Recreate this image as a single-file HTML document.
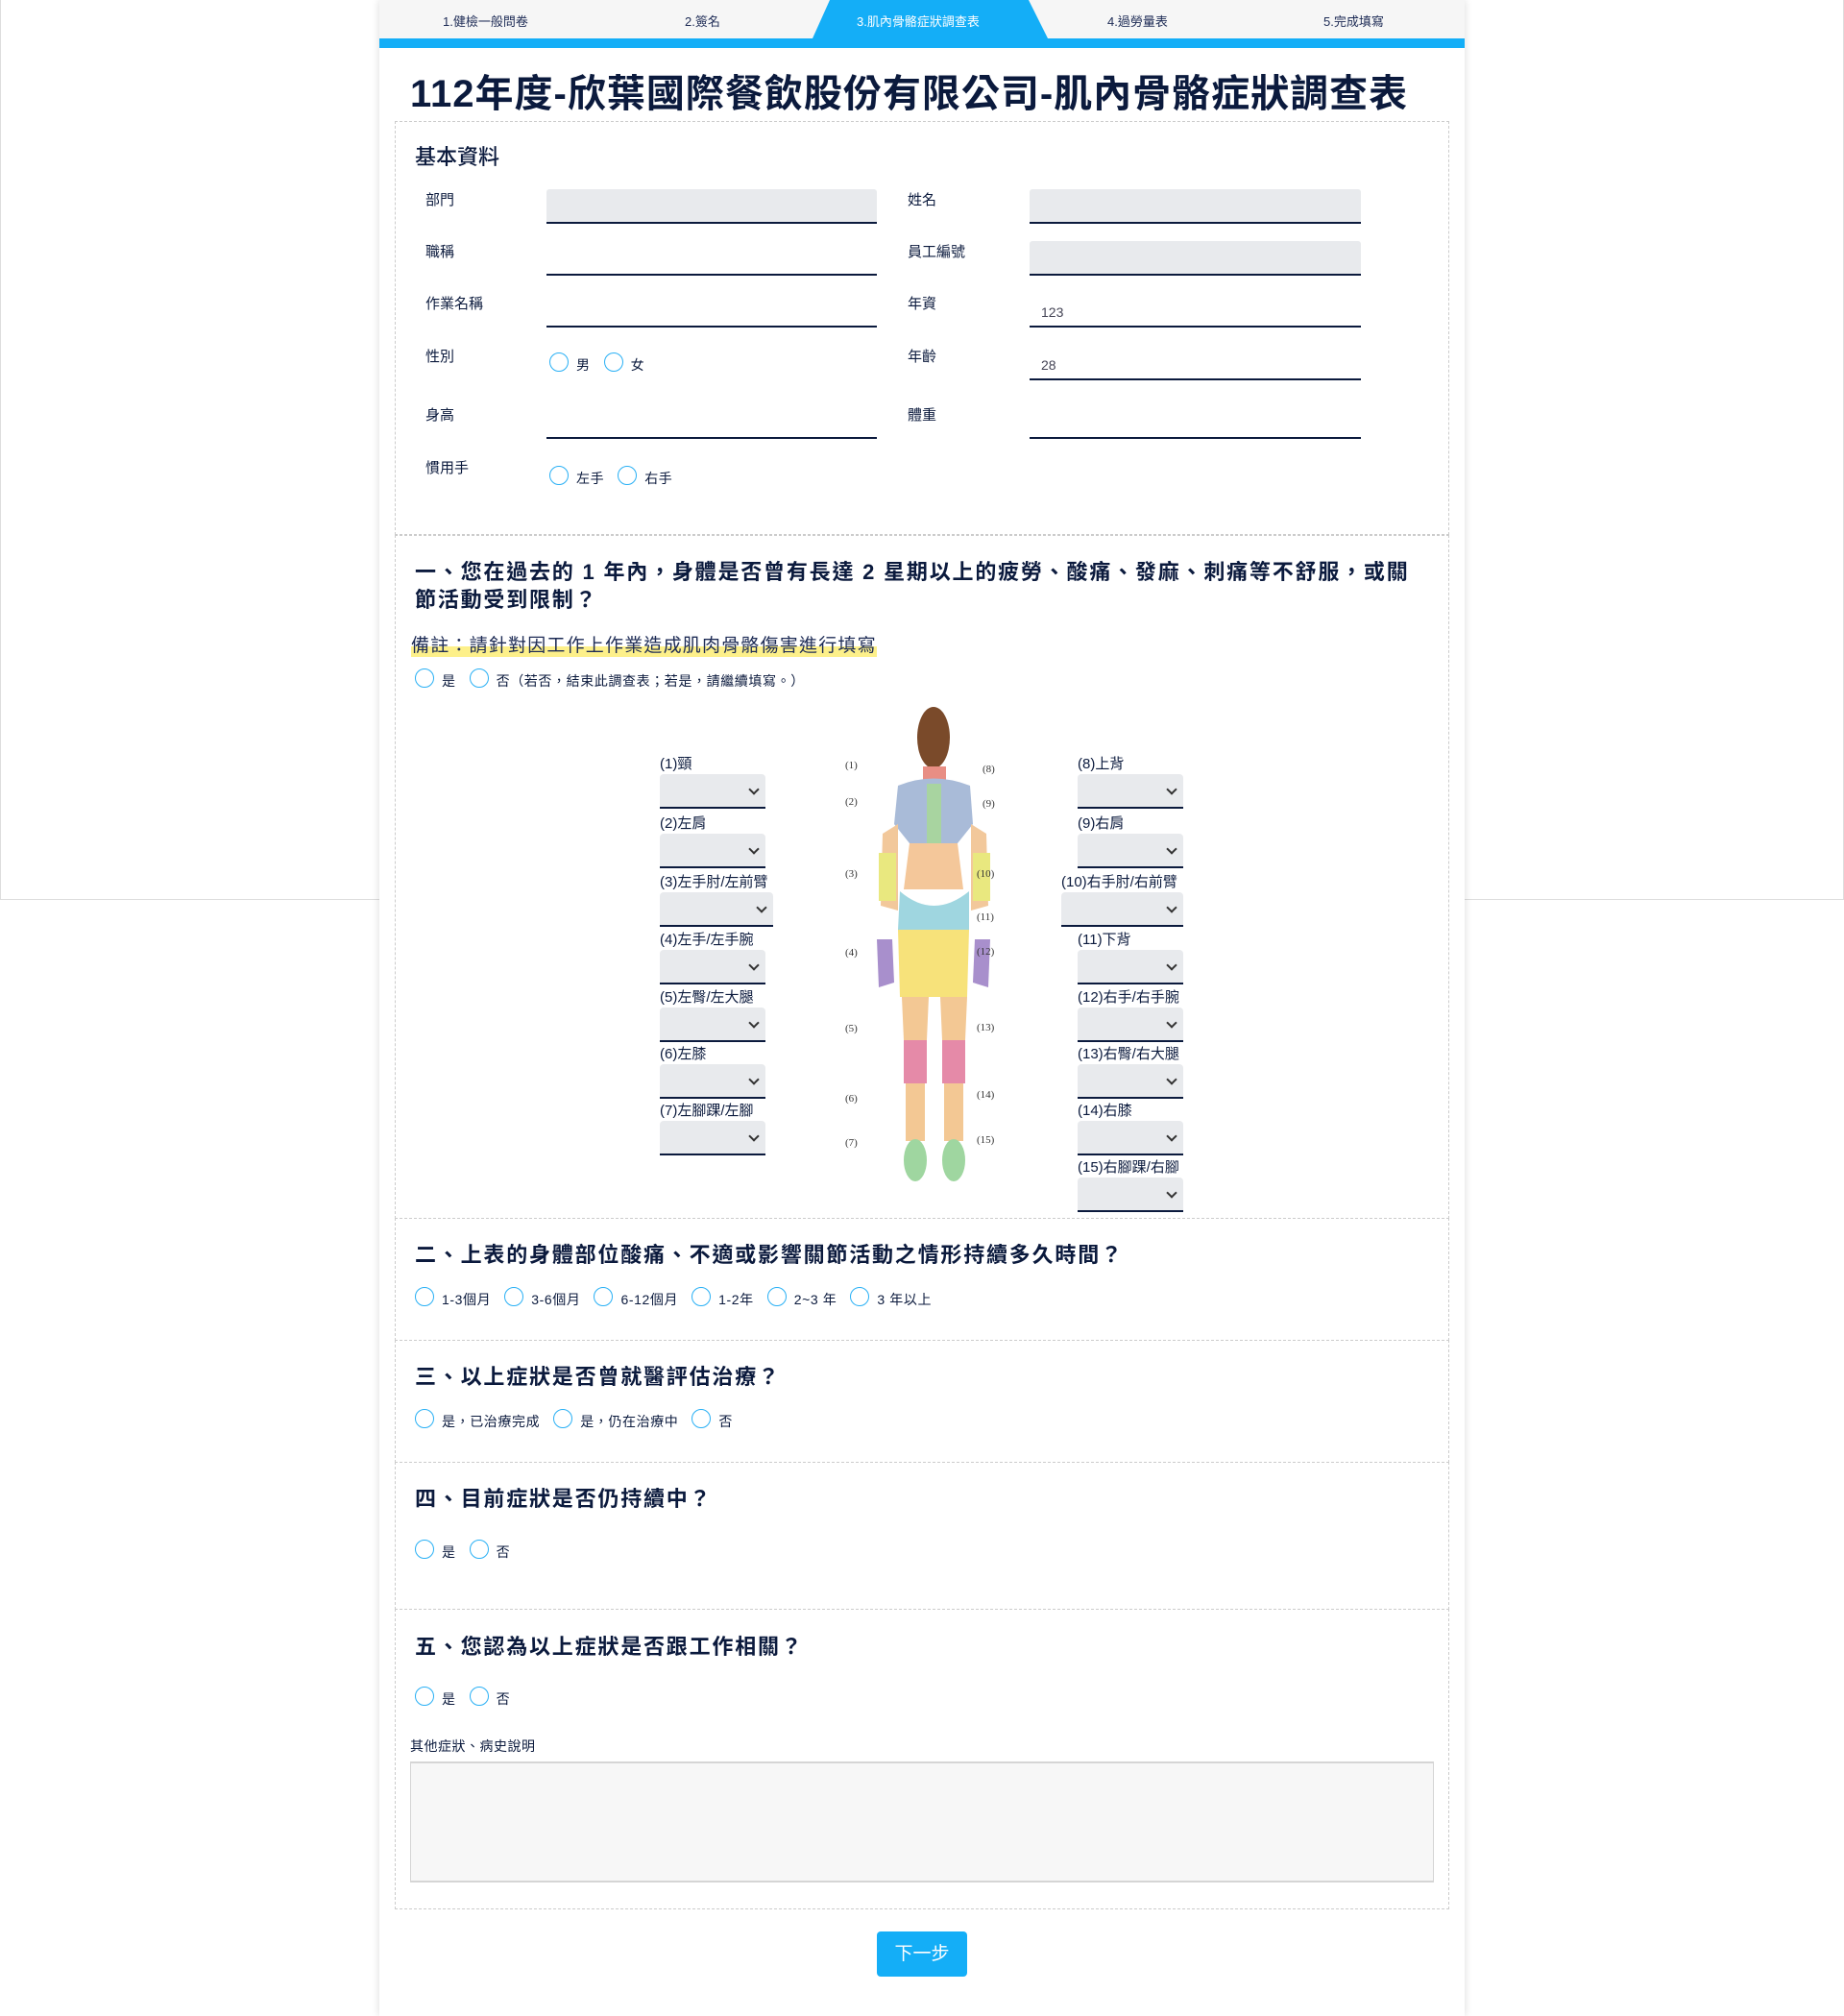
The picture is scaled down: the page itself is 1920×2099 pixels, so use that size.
<!DOCTYPE html>
<html><head><meta charset="utf-8"><style>
*{box-sizing:border-box;margin:0;padding:0}
body{width:1920px;height:2099px;position:relative;background:#fff;font-family:"Liberation Sans","Noto Sans CJK TC",sans-serif;color:#0b1a3d;overflow:hidden}
.frame{position:absolute;left:0;top:0;width:1920px;height:937px;border:1px solid #ddd;border-top:none}
.wrap{position:absolute;left:395px;top:0;width:1130px;height:2099px;background:#fff;box-shadow:0 0 8px rgba(0,0,0,.15)}
.a{position:absolute;white-space:nowrap}
.steps{position:absolute;left:0;top:0;width:1130px;height:40px;background:#f6f6f6}
.bar{position:absolute;left:0;top:40px;width:1130px;height:10px;background:#14aef7}
.st{position:absolute;top:12px;font-size:13px;color:#1d2b55}
.box{position:absolute;left:16px;width:1098px;border:1px dashed #ccc}
.lb{position:absolute;font-size:15px}
.in{position:absolute;height:36px;border-bottom:2px solid #0b1a3d;border-radius:3px 3px 0 0;font-size:14px;color:#445;padding:12px 12px 0}
.g{background:#e8eaed}
.r{display:inline-block;width:20px;height:20px;border:1.5px solid #29b0f5;border-radius:50%;vertical-align:-2px;margin-right:8px}
.ro{position:absolute;font-size:14px;white-space:nowrap;letter-spacing:.6px}
.ro span.t{margin-right:14px}
.q{position:absolute;font-size:22px;font-weight:bold;letter-spacing:1.8px;white-space:nowrap}
.sl{position:absolute;width:110px;height:36px;background:#e8eaed;border-bottom:2px solid #0b1a3d;border-radius:4px 4px 0 0}
.sl:after{content:"";position:absolute;right:8px;top:12px;width:6px;height:6px;border-right:2px solid #333;border-bottom:2px solid #333;transform:rotate(45deg)}
.sll{position:absolute;font-size:15px;white-space:nowrap}
</style></head><body>
<div class="frame"></div>
<div class="wrap">
<div class="steps"></div>
<svg class="a" style="left:451px;top:0" width="250" height="40"><polygon points="0,0 225,0 245,40 0,40" fill="#14aef7"/><polygon points="0,0 18,0 0,40" fill="#f6f6f6"/></svg>
<div class="bar"></div>
<div class="st" style="left:66px">1.健檢一般問卷</div>
<div class="st" style="left:318px">2.簽名</div>
<div class="st" style="left:497px;color:#fff">3.肌內骨骼症狀調查表</div>
<div class="st" style="left:758px">4.過勞量表</div>
<div class="st" style="left:983px">5.完成填寫</div>
<div class="a" style="left:32px;top:65px;font-size:40px;font-weight:bold;letter-spacing:1px">112年度-欣葉國際餐飲股份有限公司-肌內骨骼症狀調查表</div>

<div class="box" style="top:126px;height:431px"></div>
<div class="a" style="left:37px;top:146px;font-size:22px;font-weight:500">基本資料</div>
<div class="lb" style="left:48px;top:197px">部門</div><div class="in g" style="left:174px;top:197px;width:344px"></div>
<div class="lb" style="left:550px;top:197px">姓名</div><div class="in g" style="left:677px;top:197px;width:345px"></div>
<div class="lb" style="left:48px;top:251px">職稱</div><div class="in" style="left:174px;top:251px;width:344px"></div>
<div class="lb" style="left:550px;top:251px">員工編號</div><div class="in g" style="left:677px;top:251px;width:345px"></div>
<div class="lb" style="left:48px;top:305px">作業名稱</div><div class="in" style="left:174px;top:305px;width:344px"></div>
<div class="lb" style="left:550px;top:305px">年資</div><div class="in" style="left:677px;top:305px;width:345px">123</div>
<div class="lb" style="left:48px;top:360px">性別</div><div class="ro" style="left:177px;top:367px"><span class="r"></span><span class="t">男</span><span class="r"></span>女</div>
<div class="lb" style="left:550px;top:360px">年齡</div><div class="in" style="left:677px;top:360px;width:345px">28</div>
<div class="lb" style="left:48px;top:421px">身高</div><div class="in" style="left:174px;top:421px;width:344px"></div>
<div class="lb" style="left:550px;top:421px">體重</div><div class="in" style="left:677px;top:421px;width:345px"></div>
<div class="lb" style="left:48px;top:476px">慣用手</div><div class="ro" style="left:177px;top:485px"><span class="r"></span><span class="t">左手</span><span class="r"></span>右手</div>

<div class="box" style="top:557px;height:712px"></div>
<div class="q" style="left:37px;top:578px">一、您在過去的 1 年內，身體是否曾有長達 2 星期以上的疲勞、酸痛、發麻、刺痛等不舒服，或關</div>
<div class="q" style="left:37px;top:607px">節活動受到限制？</div>
<div class="a" style="left:33px;top:657px;font-size:19px;letter-spacing:1.2px;color:#1d2b55;background:linear-gradient(transparent 60%,#fdf08a 60%)">備註：請針對因工作上作業造成肌肉骨骼傷害進行填寫</div>
<div class="ro" style="left:37px;top:696px"><span class="r"></span><span class="t">是</span><span class="r"></span>否（若否，結束此調查表；若是，請繼續填寫。）</div>

<svg class="a" style="left:480px;top:728px" width="180" height="505" viewBox="0 0 180 505">
<g stroke="none">
<ellipse cx="97" cy="40" rx="17" ry="32" fill="#7a4a2a"/>
<rect x="86" y="70" width="24" height="14" fill="#e88e84"/>
<path d="M60 90 Q97 75 135 90 L138 130 L122 150 L72 150 L56 130 Z" fill="#a9bbd8"/>
<rect x="90" y="88" width="15" height="110" fill="#a8d4a0"/>
<path d="M72 150 L122 150 L128 198 L66 198 Z" fill="#f4c79a"/>
<path d="M62 200 Q97 230 134 200 L134 240 L60 240 Z" fill="#9fd6e0"/>
<path d="M60 240 L134 240 L132 310 L62 310 Z" fill="#f7e27a"/>
<path d="M44 140 L60 130 L60 220 L42 215 Z" fill="#f2c89b"/>
<path d="M136 130 L152 140 L154 215 L136 220 Z" fill="#f2c89b"/>
<path d="M40 160 L58 160 L58 210 L40 210 Z" fill="#e9e87f"/>
<path d="M138 160 L156 160 L156 210 L138 210 Z" fill="#e9e87f"/>
<path d="M38 250 L54 250 L56 295 L40 300 Z" fill="#a88fcc"/>
<path d="M140 250 L156 250 L154 300 L138 295 Z" fill="#a88fcc"/>
<path d="M64 310 L92 310 L90 355 L66 355 Z" fill="#f3c894"/>
<path d="M104 310 L132 310 L130 355 L106 355 Z" fill="#f3c894"/>
<rect x="66" y="355" width="24" height="45" fill="#e58aa8"/>
<rect x="106" y="355" width="24" height="45" fill="#e58aa8"/>
<rect x="68" y="400" width="20" height="60" fill="#f3c894"/>
<rect x="108" y="400" width="20" height="60" fill="#f3c894"/>
<ellipse cx="78" cy="480" rx="12" ry="22" fill="#9fd6a0"/>
<ellipse cx="118" cy="480" rx="12" ry="22" fill="#9fd6a0"/>
</g>
<g font-size="11" fill="#333" font-family="Liberation Serif,serif">
<text x="5" y="72">(1)</text><text x="5" y="110">(2)</text><text x="5" y="185">(3)</text><text x="5" y="267">(4)</text><text x="5" y="346">(5)</text><text x="5" y="419">(6)</text><text x="5" y="465">(7)</text>
<text x="148" y="76">(8)</text><text x="148" y="112">(9)</text><text x="142" y="185">(10)</text><text x="142" y="230">(11)</text><text x="142" y="266">(12)</text><text x="142" y="345">(13)</text><text x="142" y="415">(14)</text><text x="142" y="462">(15)</text>
</g>
</svg>

<div class="sll" style="left:292px;top:784px">(1)頸</div><div class="sl" style="left:292px;top:806px"></div>
<div class="sll" style="left:292px;top:846px">(2)左肩</div><div class="sl" style="left:292px;top:868px"></div>
<div class="sll" style="left:292px;top:907px">(3)左手肘/左前臂</div><div class="sl" style="left:292px;top:929px;width:118px"></div>
<div class="sll" style="left:292px;top:967px">(4)左手/左手腕</div><div class="sl" style="left:292px;top:989px"></div>
<div class="sll" style="left:292px;top:1027px">(5)左臀/左大腿</div><div class="sl" style="left:292px;top:1049px"></div>
<div class="sll" style="left:292px;top:1086px">(6)左膝</div><div class="sl" style="left:292px;top:1108px"></div>
<div class="sll" style="left:292px;top:1145px">(7)左腳踝/左腳</div><div class="sl" style="left:292px;top:1167px"></div>

<div class="sll" style="left:727px;top:784px">(8)上背</div><div class="sl" style="left:727px;top:806px"></div>
<div class="sll" style="left:727px;top:846px">(9)右肩</div><div class="sl" style="left:727px;top:868px"></div>
<div class="sll" style="left:710px;top:907px">(10)右手肘/右前臂</div><div class="sl" style="left:710px;top:929px;width:127px"></div>
<div class="sll" style="left:727px;top:967px">(11)下背</div><div class="sl" style="left:727px;top:989px"></div>
<div class="sll" style="left:727px;top:1027px">(12)右手/右手腕</div><div class="sl" style="left:727px;top:1049px"></div>
<div class="sll" style="left:727px;top:1086px">(13)右臀/右大腿</div><div class="sl" style="left:727px;top:1108px"></div>
<div class="sll" style="left:727px;top:1145px">(14)右膝</div><div class="sl" style="left:727px;top:1167px"></div>
<div class="sll" style="left:727px;top:1204px">(15)右腳踝/右腳</div><div class="sl" style="left:727px;top:1226px"></div>

<div class="box" style="top:1268px;height:128px"></div>
<div class="q" style="left:37px;top:1289px">二、上表的身體部位酸痛、不適或影響關節活動之情形持續多久時間？</div>
<div class="ro" style="left:37px;top:1340px"><span class="r"></span><span class="t">1-3個月</span><span class="r"></span><span class="t">3-6個月</span><span class="r"></span><span class="t">6-12個月</span><span class="r"></span><span class="t">1-2年</span><span class="r"></span><span class="t">2~3 年</span><span class="r"></span>3 年以上</div>

<div class="box" style="top:1395px;height:128px"></div>
<div class="q" style="left:37px;top:1416px">三、以上症狀是否曾就醫評估治療？</div>
<div class="ro" style="left:37px;top:1467px"><span class="r"></span><span class="t">是，已治療完成</span><span class="r"></span><span class="t">是，仍在治療中</span><span class="r"></span>否</div>

<div class="box" style="top:1522px;height:154px"></div>
<div class="q" style="left:37px;top:1543px">四、目前症狀是否仍持續中？</div>
<div class="ro" style="left:37px;top:1603px"><span class="r"></span><span class="t">是</span><span class="r"></span>否</div>

<div class="box" style="top:1675px;height:313px"></div>
<div class="q" style="left:37px;top:1697px">五、您認為以上症狀是否跟工作相關？</div>
<div class="ro" style="left:37px;top:1756px"><span class="r"></span><span class="t">是</span><span class="r"></span>否</div>
<div class="a" style="left:32px;top:1808px;font-size:14px;letter-spacing:.5px">其他症狀、病史說明</div>
<div class="a" style="left:32px;top:1834px;width:1066px;height:126px;background:#f7f7f7;border:2px solid #d5d5d5;border-left-width:1px;border-right-width:1px"></div>

<div class="a" style="left:518px;top:2011px;width:94px;height:47px;background:#14aef7;border-radius:4px;color:#fff;font-size:19px;text-align:center;line-height:47px">下一步</div>
</div>
</body></html>
